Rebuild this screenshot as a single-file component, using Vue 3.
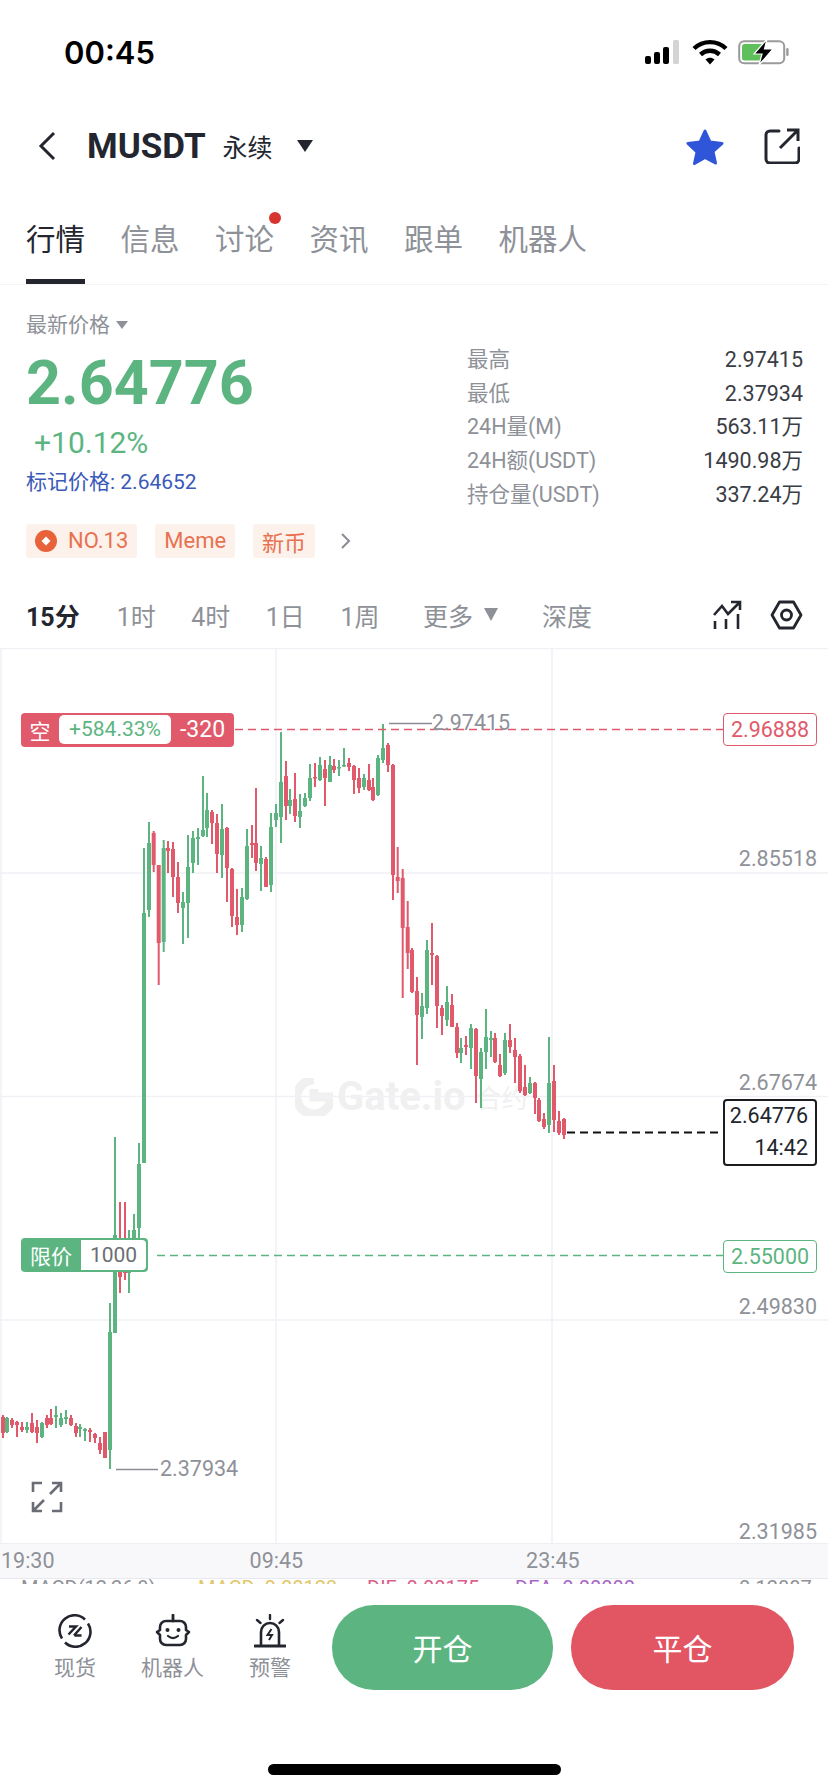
<template>
  <div class="page">
    <!-- status bar -->
    <div class="status">
      <span class="clock">00:45</span>
      <div class="status-icons">
        <svg class="signal" width="38" height="26" viewBox="0 0 38 26">
          <rect x="1" y="17" width="6" height="8" rx="2" fill="#000" />
          <rect x="10" y="13" width="6" height="12" rx="2" fill="#000" />
          <rect x="19" y="8" width="6" height="17" rx="2" fill="#000" />
          <rect x="29" y="1" width="6" height="24" rx="1.5" fill="#d4d4d4" />
        </svg>
        <svg class="wifi" width="36" height="26" viewBox="0 0 36 26">
          <path d="M2 9.500C11 1 25 1 34 9.500" fill="none" stroke="#000" stroke-width="4.400" />
          <path d="M8.500 15.500C14 10.500 22 10.500 27.500 15.500" fill="none" stroke="#000" stroke-width="4.400" />
          <path d="M13.500 20.500C16 18 20 18 22.500 20.500L18 25.500Z" fill="#000" />
        </svg>
        <svg class="battery" width="51" height="26" viewBox="0 0 51 26">
          <rect x="1.200" y="2.200" width="45" height="22" rx="5" fill="none" stroke="#9a9a9a" stroke-width="2" />
          <rect x="4" y="5" width="22" height="16.500" rx="2.500" fill="#5fbf5a" />
          <rect x="48.200" y="9" width="2.400" height="8" rx="1.200" fill="#9a9a9a" />
          <path d="M29 0L16 15h8L21 26L35 10h-8.500Z" fill="#000" stroke="#fff" stroke-width="1.200" />
        </svg>
      </div>
    </div>

    <!-- title row -->
    <div class="nav">
      <svg class="back" width="18" height="30" viewBox="0 0 18 30">
        <path d="M16 2L3 15l13 13" fill="none" stroke="#23262e" stroke-width="3" />
      </svg>
      <span class="symbol">MUSDT</span>
      <span class="kind">永续</span>
      <span class="kind-caret"></span>
      <svg class="star" width="40" height="37" viewBox="0 0 40 37">
        <path d="M20 3l5 11 12 1.400-9 8.100 2.500 11.500L20 29.500 9.500 35.500 12 24 3 15.400 15 14Z" fill="#2f55d8" stroke="#2f55d8" stroke-width="3" stroke-linejoin="round" />
      </svg>
      <svg class="share" width="36" height="36" viewBox="0 0 36 36">
        <path d="M15 3H6a4 4 0 0 0-4 4v24a4 4 0 0 0 4 4h25a4 4 0 0 0 4-4V20" fill="none" stroke="#23262e" stroke-width="3" stroke-linecap="round" />
        <path d="M16 20L34 2M23 2h11v11" fill="none" stroke="#23262e" stroke-width="3" />
      </svg>
    </div>

    <!-- section tabs -->
    <div class="tabs">
      <span v-for="(tab, i) in tabs" :key="tab" class="tab" :class="{ active: i === 0 }">
        {{ tab }}
        <i v-if="tab === '讨论'" class="tab-dot"></i>
      </span>
    </div>

    <!-- quote summary -->
    <div class="quote">
      <div class="quote-left">
        <div class="latest">最新价格<span class="latest-caret"></span></div>
        <div class="price">2.64776</div>
        <div class="change">+10.12%</div>
        <div class="mark">标记价格: 2.64652</div>
      </div>
      <div class="stats">
        <div v-for="row in stats" :key="row[0]" class="stat-row">
          <span>{{ row[0] }}</span>
          <b>{{ row[1] }}</b>
        </div>
      </div>
    </div>

    <div class="tags">
      <span class="tag">
        <svg width="22" height="22" viewBox="0 0 22 22">
          <circle cx="11" cy="11" r="11" fill="#e8623a" />
          <path d="M11 6.500l4.500 4.500-4.500 4.500-4.500-4.500Z" fill="#fff" />
        </svg>
        NO.13
      </span>
      <span class="tag">Meme</span>
      <span class="tag">新币</span>
      <svg class="tag-more" width="11" height="16" viewBox="0 0 11 16">
        <path d="M2 1l7 7-7 7" fill="none" stroke="#8a8d94" stroke-width="2" />
      </svg>
    </div>

    <!-- timeframe switcher -->
    <div class="frames">
      <span class="frame active">15分</span>
      <span class="frame">1时</span>
      <span class="frame">4时</span>
      <span class="frame">1日</span>
      <span class="frame">1周</span>
      <span class="frame more">更多<i class="more-caret"></i></span>
      <span class="frame depth">深度</span>
      <svg class="frame-chart" width="30" height="30" viewBox="0 0 30 30">
        <path d="M2 15L10 6l6 8L27 3M19 2h9v8" fill="none" stroke="#23262e" stroke-width="2.600" />
        <path d="M3 21v8M14 19v10M26 14v15" fill="none" stroke="#23262e" stroke-width="2.600" />
      </svg>
      <svg class="frame-hex" width="33" height="30" viewBox="0 0 33 30">
        <path d="M9.500 2h14l7.500 13-7.500 13h-14L2 15Z" fill="none" stroke="#23262e" stroke-width="2.800" stroke-linejoin="round" />
        <circle cx="16.500" cy="15" r="5" fill="none" stroke="#23262e" stroke-width="2.800" />
      </svg>
    </div>

    <!-- candlestick chart -->
    <div class="chart">
      <div class="watermark">
        <svg width="38" height="38" viewBox="0 0 38 38">
          <path d="M19 2a17 17 0 1 0 17 17H19v-8" fill="none" stroke="#f0f0f1" stroke-width="9" />
        </svg>
        <b>Gate.io</b><em>合约</em>
      </div>

      <svg class="plot" width="828" height="895" viewBox="0 648 828 895">
        <g stroke="#f0f1f5" stroke-width="1.500">
          <path d="M0 648.500H828M1 648V1543M276 648V1543M552 648V1543" fill="none" />
          <path d="M0 873H828M0 1096.500H828M0 1320H828" fill="none" />
        </g>
        <g v-for="(c, i) in candles" :key="i" :fill="c[1] === 'g' ? '#5cb581' : '#e05a6b'">
          <rect :x="c[0] - 1" :y="c[2]" width="2" :height="c[5] - c[2]" />
          <rect :x="c[0] - 2" :y="c[3]" width="4" :height="Math.max(c[4] - c[3], 1.500)" />
        </g>
        <path d="M235 729.500H723" stroke="#e05a6b" stroke-width="1.500" stroke-dasharray="8 5" />
        <path d="M157 1255.500H723" stroke="#5cb581" stroke-width="1.500" stroke-dasharray="8 5" />
        <path d="M567 1132.500H723" stroke="#111" stroke-width="2" stroke-dasharray="8 5" />
        <path d="M389 723.500H432M116 1469.500H158" stroke="#8a8d94" stroke-width="1.500" />
      </svg>

      <span class="axis" style="top: 196px">2.85518</span>
      <span class="axis" style="top: 420px">2.67674</span>
      <span class="axis" style="top: 644px">2.49830</span>
      <span class="axis" style="top: 869px">2.31985</span>
      <span class="peak" style="left: 432px; top: 60px">2.97415</span>
      <span class="peak" style="left: 160px; top: 806px">2.37934</span>

      <div class="order short">
        <span class="order-side">空</span>
        <span class="order-pnl">+584.33%</span>
        <span class="order-qty">-320</span>
      </div>
      <div class="order limit">
        <span class="order-side">限价</span>
        <span class="order-amount">1000</span>
      </div>

      <span class="level level-short">2.96888</span>
      <span class="level level-limit">2.55000</span>
      <div class="level-now">
        <span>2.64776</span>
        <span>14:42</span>
      </div>

      <svg class="expand" width="32" height="32" viewBox="0 0 32 32">
        <path d="M2 11V2h9M21 2h9v9M30 2L19 13M2 21v9h9M2 30l11-11M30 21v9h-9" fill="none" stroke="#6a6d75" stroke-width="2.600" />
      </svg>
    </div>

    <div class="times">
      <span>19:30</span>
      <span class="t-mid">09:45</span>
      <span class="t-end">23:45</span>
    </div>

    <!-- indicator panel, only its first pixels show above the action bar -->
    <div class="indicator">
      <span class="ind-a">MACD(12,26,9)</span>
      <span class="ind-b">MACD: 0.00123</span>
      <span class="ind-c">DIF: 0.00175</span>
      <span class="ind-d">DEA: 0.00000</span>
      <span class="ind-e">0.12887</span>
    </div>

    <!-- bottom actions -->
    <div class="actions">
      <div class="tool">
        <svg width="34" height="34" viewBox="0 0 34 34">
          <path d="M27 5.500A15 15 0 0 0 4 24.500M7 28.500A15 15 0 0 0 30 9.500" fill="none" stroke="#23262e" stroke-width="2.600" />
          <path d="M11 12.500h7l-7.500 8M16.500 21.500h7M23.500 13l-7.500 8.500" fill="none" stroke="#23262e" stroke-width="2.500" />
        </svg>
        <span>现货</span>
      </div>
      <div class="tool">
        <svg width="36" height="34" viewBox="0 0 36 34">
          <path d="M18 1v6" stroke="#23262e" stroke-width="2.800" stroke-linecap="round" />
          <path d="M11 7h14a6 6 0 0 1 6 6v3l3 2-3 3v4a6 6 0 0 1-6 6H11a6 6 0 0 1-6-6v-4l-3-3 3-2v-3a6 6 0 0 1 6-6Z" fill="none" stroke="#23262e" stroke-width="2.600" stroke-linejoin="round" />
          <circle cx="12.500" cy="16" r="2" fill="#23262e" />
          <circle cx="23.500" cy="16" r="2" fill="#23262e" />
          <path d="M13 22c3 2.500 7 2.500 10 0" fill="none" stroke="#23262e" stroke-width="2.200" stroke-linecap="round" />
        </svg>
        <span>机器人</span>
      </div>
      <div class="tool">
        <svg width="32" height="34" viewBox="0 0 32 34">
          <path d="M16 1v4M3 6l3.500 3M29 6l-3.500 3" stroke="#23262e" stroke-width="2.400" stroke-linecap="round" />
          <path d="M7 31V18a9 9 0 0 1 18 0v13" fill="none" stroke="#23262e" stroke-width="2.600" />
          <path d="M1 32h30" stroke="#23262e" stroke-width="3.200" stroke-linecap="round" />
          <path d="M17.500 15l-4 6h4.500l-3 5" fill="none" stroke="#23262e" stroke-width="2" />
        </svg>
        <span>预警</span>
      </div>
      <button class="trade open">开仓</button>
      <button class="trade close">平仓</button>
    </div>

    <div class="home-bar"></div>
  </div>
</template>

<script setup>
const tabs = ['行情', '信息', '讨论', '资讯', '跟单', '机器人']

const stats = [
  ['最高', '2.97415'],
  ['最低', '2.37934'],
  ['24H量(M)', '563.11万'],
  ['24H额(USDT)', '1490.98万'],
  ['持仓量(USDT)', '337.24万'],
]

// x, colour, wick top, body top, body bottom, wick bottom (page pixels)
const candles = [
  [3, 'r', 1415, 1417, 1433, 1438], [7, 'g', 1417, 1418, 1432, 1433], [12, 'r', 1418, 1420, 1425, 1428],
  [17, 'r', 1421, 1422, 1425, 1437], [22, 'r', 1422, 1427, 1430, 1432], [27, 'g', 1422, 1427, 1430, 1433],
  [32, 'r', 1413, 1423, 1432, 1433], [37, 'r', 1420, 1427, 1433, 1443], [42, 'g', 1422, 1423, 1437, 1438],
  [47, 'r', 1415, 1418, 1425, 1428], [51, 'r', 1409, 1418, 1424, 1425], [56, 'g', 1406, 1415, 1417, 1428],
  [61, 'g', 1413, 1418, 1425, 1427], [66, 'g', 1410, 1417, 1419, 1424], [71, 'r', 1415, 1418, 1425, 1426],
  [76, 'r', 1423, 1426, 1433, 1437], [80, 'g', 1424, 1427, 1429, 1437], [85, 'g', 1428, 1429, 1431, 1441],
  [90, 'r', 1428, 1430, 1432, 1442], [95, 'r', 1433, 1434, 1438, 1443], [100, 'r', 1437, 1443, 1450, 1454],
  [105, 'r', 1432, 1432, 1458, 1458], [110, 'g', 1303, 1332, 1450, 1469], [115, 'g', 1137, 1235, 1333, 1333],
  [120, 'r', 1202, 1240, 1277, 1293], [125, 'r', 1202, 1240, 1273, 1280], [129, 'g', 1230, 1238, 1273, 1293],
  [134, 'g', 1214, 1230, 1238, 1238], [139, 'g', 1143, 1164, 1228, 1238], [144, 'g', 848, 913, 1163, 1163],
  [149, 'g', 822, 843, 910, 917], [153.700, 'r', 831, 833, 865, 872], [158.700, 'r', 865, 865, 943, 985],
  [163.700, 'g', 840, 848, 942, 952], [168, 'r', 841, 848, 851, 873], [173, 'r', 842, 849, 877, 897],
  [178, 'r', 862, 877, 903, 913], [183, 'g', 892, 902, 908, 944], [188, 'g', 835, 867, 903, 938],
  [193, 'g', 831, 838, 863, 873], [198, 'g', 828, 837, 839, 865], [203, 'g', 776, 830, 836, 837],
  [207, 'g', 793, 810, 828, 837], [212, 'r', 810, 812, 823, 844], [217, 'r', 814, 823, 854, 873],
  [222, 'g', 804, 829, 855, 878], [227, 'r', 827, 828, 868, 902], [232, 'r', 868, 869, 916, 927],
  [237, 'r', 889, 917, 925, 935], [242, 'g', 888, 897, 925, 932], [247, 'g', 829, 846, 899, 900],
  [252, 'r', 825, 843, 845, 858], [256, 'r', 788, 843, 863, 871], [261, 'g', 846, 858, 864, 891],
  [266, 'r', 857, 859, 887, 887], [271, 'g', 813, 827, 885, 892], [276, 'g', 804, 813, 820, 827],
  [281, 'g', 732, 782, 817, 843], [286, 'r', 761, 776, 806, 820], [290, 'g', 789, 800, 806, 814],
  [295, 'r', 773, 799, 816, 822], [300, 'g', 794, 811, 817, 828], [305, 'g', 793, 798, 806, 807],
  [310, 'g', 764, 778, 798, 801], [315, 'r', 763, 777, 778, 787], [320, 'g', 757, 765, 780, 781],
  [325, 'r', 760, 769, 778, 806], [330, 'g', 756, 765, 782, 782], [334, 'r', 759, 766, 770, 773],
  [339, 'g', 760, 767, 768, 776], [344, 'g', 748, 765, 766, 767], [349, 'r', 758, 763, 767, 771],
  [354, 'r', 765, 766, 780, 794], [359, 'r', 768, 778, 788, 793], [364, 'g', 774, 778, 787, 790],
  [369, 'r', 764, 780, 790, 791], [373, 'r', 778, 787, 800, 801], [378, 'g', 755, 758, 795, 796],
  [383, 'g', 724, 748, 760, 763], [388, 'r', 743, 745, 765, 772], [393, 'r', 764, 765, 875, 900],
  [397.700, 'r', 847, 877, 881, 893], [402.700, 'r', 869, 878, 928, 998], [407.700, 'r', 901, 927, 953, 969],
  [412, 'r', 948, 950, 992, 993], [417, 'r', 977, 991, 1015, 1065], [422, 'g', 993, 1006, 1017, 1039],
  [427, 'g', 940, 950, 1008, 1014], [432, 'r', 923, 953, 955, 985], [437, 'r', 955, 956, 1006, 1028],
  [442, 'r', 1005, 1008, 1016, 1035], [447, 'g', 986, 1002, 1020, 1026], [452, 'r', 994, 1005, 1027, 1027],
  [457, 'r', 1023, 1027, 1053, 1058], [461, 'g', 1038, 1048, 1053, 1063], [466, 'r', 1036, 1045, 1047, 1055],
  [471, 'g', 1024, 1028, 1048, 1069], [476, 'r', 1028, 1029, 1076, 1103], [481, 'g', 1048, 1052, 1079, 1108],
  [486, 'g', 1009, 1037, 1052, 1069], [491, 'g', 1031, 1038, 1040, 1057], [495, 'r', 1033, 1038, 1062, 1063],
  [500, 'r', 1054, 1065, 1076, 1077], [505, 'g', 1033, 1040, 1073, 1075], [510, 'r', 1024, 1040, 1047, 1053],
  [515, 'r', 1038, 1050, 1057, 1083], [520, 'r', 1054, 1056, 1091, 1093], [525, 'r', 1065, 1087, 1095, 1096],
  [530, 'g', 1077, 1083, 1093, 1094], [535, 'r', 1082, 1083, 1098, 1114], [539, 'r', 1098, 1100, 1121, 1122],
  [544, 'r', 1113, 1119, 1127, 1129], [549, 'g', 1037, 1083, 1125, 1133], [554, 'r', 1065, 1081, 1120, 1132],
  [559, 'r', 1111, 1121, 1133, 1135], [564, 'r', 1118, 1119, 1135, 1139],
]
</script>

<style>
html,
body {
  margin: 0;
  background: #fff;
}
</style>

<style scoped>
.page {
  width: 828px;
  height: 1792px;
  overflow: hidden;
  background: #fff;
  color: #23262e;
  font-family: Roboto, "Noto Sans CJK SC", sans-serif;
}

.status {
  height: 100px;
  display: flex;
  justify-content: space-between;
  padding: 39px 39px 0 64px;
  box-sizing: border-box;
}
.clock {
  margin-top: 1px;
  font-family: Inter, sans-serif;
  font-size: 31px;
  font-weight: 600;
  line-height: 26px;
  color: #000;
}
.status-icons {
  display: flex;
  gap: 10px;
  height: 26px;
}

.nav {
  height: 94px;
  display: flex;
  align-items: center;
  padding: 0 28px 2px 38px;
  box-sizing: border-box;
}
.symbol {
  margin-left: 31px;
  font-size: 35px;
  font-weight: 700;
}
.kind {
  margin-left: 17px;
  font-size: 25px;
}
.kind-caret {
  margin-left: 24px;
  border-left: 8px solid transparent;
  border-right: 8px solid transparent;
  border-top: 12px solid #23262e;
}
.star {
  margin-left: auto;
}
.share {
  margin-left: 39px;
}

.tabs {
  height: 91px;
  display: flex;
  gap: 35.500px;
  padding: 0 26px;
  border-bottom: 1.500px solid #f4f4f6;
  box-sizing: border-box;
}
.tab {
  position: relative;
  padding-top: 26px;
  font-size: 29.500px;
  line-height: 40px;
  color: #8e9198;
}
.tab.active {
  color: #23262e;
  border-bottom: 5px solid #23262e;
  box-sizing: border-box;
  height: 90px;
}
.tab-dot {
  position: absolute;
  top: 18px;
  right: -7px;
  width: 12px;
  height: 12px;
  border-radius: 50%;
  background: #d8342f;
}

.quote {
  display: flex;
  justify-content: space-between;
  padding: 0 25px 0 26px;
}
.quote-left {
  padding-top: 30px;
}
.latest {
  display: flex;
  align-items: center;
  font-size: 21px;
  line-height: 20px;
  color: #8e9198;
}
.latest-caret {
  margin-left: 6px;
  border-left: 6px solid transparent;
  border-right: 6px solid transparent;
  border-top: 8px solid #8e9198;
}
.price {
  margin-top: 18px;
  font-size: 61px;
  font-weight: 700;
  line-height: 60px;
  color: #5cb581;
}
.change {
  margin: 15px 0 0 8px;
  font-size: 30px;
  line-height: 30px;
  color: #5cb581;
}
.mark {
  margin-top: 12px;
  font-size: 21px;
  line-height: 24px;
  color: #3a59b8;
}
.stats {
  width: 336px;
  padding-top: 58px;
}
.stat-row {
  display: flex;
  justify-content: space-between;
  font-size: 21.500px;
  line-height: 33.700px;
  color: #8e9198;
}
.stat-row b {
  font-weight: 400;
  color: #3a3d45;
}

.tags {
  display: flex;
  align-items: center;
  margin-top: 12px;
  padding-left: 26px;
  height: 34px;
}
.tag {
  display: flex;
  align-items: center;
  gap: 11px;
  height: 34px;
  padding: 0 9px;
  margin-right: 18px;
  border-radius: 3px;
  background: #fdf1ec;
  color: #e8714f;
  font-size: 22px;
}
.tag-more {
  margin-left: 7px;
}

.frames {
  display: flex;
  align-items: center;
  height: 42px;
  margin-top: 36px;
  margin-bottom: 12px;
  padding: 0 25px 0 26px;
  font-size: 25px;
  color: #8e9198;
}
.frame {
  margin-right: 35.500px;
  display: flex;
  align-items: center;
}
.frame.active {
  color: #23262e;
  font-weight: 700;
  margin-right: 37px;
}
.frame.more {
  margin-left: 8px;
  margin-right: 44px;
}
.more-caret {
  margin-left: 11px;
  border-left: 7.500px solid transparent;
  border-right: 7.500px solid transparent;
  border-top: 13px solid #8e9198;
}
.frame.depth {
  margin-right: 0;
}
.frame-chart {
  margin-left: auto;
}
.frame-hex {
  margin-left: 28px;
}

.chart {
  position: relative;
  height: 895px;
  overflow: hidden;
}
.plot {
  position: absolute;
  left: 0;
  top: 0;
}
.watermark {
  position: absolute;
  left: 295px;
  top: 429px;
  display: flex;
  align-items: center;
  height: 40px;
  color: #f0f0f1;
}
.watermark b {
  margin-left: 4px;
  font-size: 40px;
  font-weight: 700;
}
.watermark em {
  margin-left: 10px;
  font-size: 26px;
  font-style: normal;
}

.axis {
  position: absolute;
  right: 11px;
  font-size: 21.500px;
  line-height: 30px;
  color: #8e9198;
}
.peak {
  position: absolute;
  font-size: 21.500px;
  line-height: 30px;
  color: #8e9198;
}

.order {
  position: absolute;
  left: 21px;
  display: flex;
  align-items: center;
  height: 34px;
  border-radius: 4px;
  font-size: 21px;
  color: #fff;
  box-sizing: border-box;
}
.order.short {
  top: 65px;
  width: 213px;
  background: #e05a6b;
}
.order.limit {
  top: 590px;
  width: 127px;
  background: #5cb581;
}
.order-side {
  width: 38px;
  text-align: center;
}
.limit .order-side {
  width: 60px;
  font-size: 21px;
}
.order-pnl {
  width: 112px;
  height: 29px;
  line-height: 29px;
  text-align: center;
  border-radius: 5px;
  background: #fff;
  color: #5cb581;
}
.order-qty {
  margin-left: 9px;
  font-size: 23px;
}
.order-amount {
  width: 65px;
  height: 30px;
  line-height: 30px;
  text-align: center;
  border-radius: 0 4px 4px 0;
  background: #fff;
  color: #6b6e75;
}

.level {
  position: absolute;
  left: 723px;
  width: 94px;
  height: 33px;
  line-height: 31px;
  text-align: center;
  font-size: 21.500px;
  border: 1px solid;
  border-radius: 4px;
  box-sizing: border-box;
  background: #fff;
}
.level-short {
  top: 65px;
  color: #e05a6b;
  border-color: #e05a6b;
}
.level-limit {
  top: 592px;
  color: #5cb581;
  border-color: #5cb581;
}
.level-now {
  position: absolute;
  left: 723px;
  top: 451px;
  width: 94px;
  height: 67px;
  display: flex;
  flex-direction: column;
  align-items: flex-end;
  justify-content: center;
  gap: 4px;
  padding-right: 7px;
  border: 2px solid #1c1c1f;
  border-radius: 4px;
  box-sizing: border-box;
  background: #fff;
  font-size: 21.500px;
  line-height: 28px;
  color: #23262e;
}
.expand {
  position: absolute;
  left: 31px;
  top: 833px;
}

.times {
  display: flex;
  height: 35px;
  padding-left: 1px;
  background: #f8f8fb;
  border-top: 1.500px solid #eeeff3;
  box-sizing: border-box;
  font-size: 21.500px;
  line-height: 34px;
  color: #8e9198;
}
.t-mid {
  margin-left: 195px;
}
.t-end {
  margin-left: 223px;
}

.indicator {
  position: relative;
  height: 6px;
  overflow: hidden;
  border-top: 1.500px solid #e8e9ee;
  box-sizing: border-box;
  font-size: 20px;
  line-height: 20px;
  white-space: nowrap;
}
.indicator span {
  position: absolute;
  top: -1px;
}
.ind-a {
  left: 21px;
  color: #8e9198;
}
.ind-b {
  left: 198px;
  color: #e3c56a;
}
.ind-c {
  left: 367px;
  color: #d9608a;
}
.ind-d {
  left: 515px;
  color: #a866c4;
}
.ind-e {
  left: 739px;
  color: #8e9198;
}

.actions {
  display: flex;
  height: 85px;
  margin-top: 21px;
  padding-left: 54px;
}
.tool {
  display: flex;
  flex-direction: column;
  align-items: center;
  margin-top: 9px;
  margin-right: 45px;
  font-size: 21px;
  line-height: 24px;
  color: #8e9198;
}
.tool span {
  margin-top: 8px;
}
.tool:nth-child(3) {
  margin-right: 41px;
}
.trade {
  width: 221px;
  height: 85px;
  flex: none;
  border: 0;
  border-radius: 42px;
  color: #fff;
  font-family: inherit;
  font-size: 30px;
}
.trade.open {
  background: #5cb581;
}
.trade.close {
  width: 223px;
  margin-left: 18px;
  background: #e25563;
}

.home-bar {
  width: 293px;
  height: 11px;
  margin: 74px auto 0;
  border-radius: 6px;
  background: #000;
}
</style>
